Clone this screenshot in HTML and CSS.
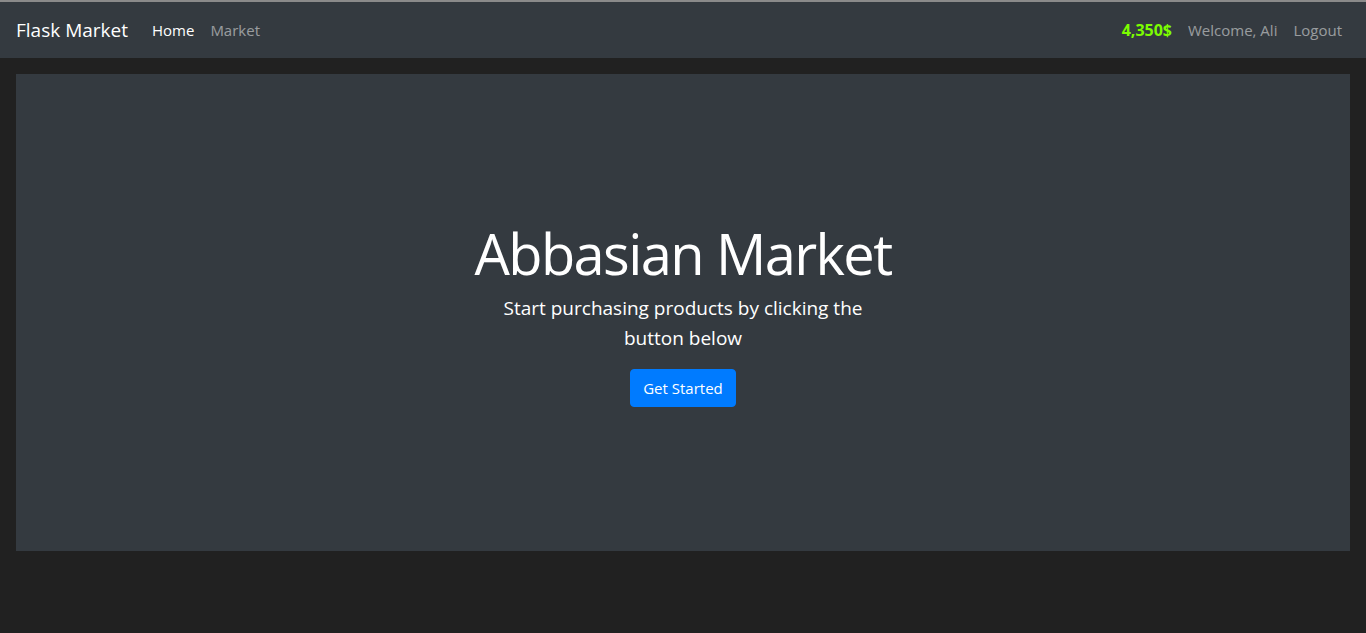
FILE: index.html
```html
<!DOCTYPE html>
<html>
<head>
<meta charset="utf-8">
<title>Flask Market</title>
<link rel="stylesheet" href="styles.css">
</head>
<body>
<div class="topline"></div>
<nav class="navbar">
  <a class="brand" href="#">Flask Market</a>
  <ul class="nav nav-left">
    <li><a class="nav-link active" href="#">Home</a></li>
    <li><a class="nav-link" href="#">Market</a></li>
  </ul>
  <ul class="nav nav-right">
    <li><span class="nav-link budget">4,350$</span></li>
    <li><a class="nav-link" href="#">Welcome, Ali</a></li>
    <li><a class="nav-link" href="#">Logout</a></li>
  </ul>
</nav>
<main class="page">
  <section class="hero">
    <div class="hero-inner">
      <h1 class="hero-title">Abbasian Market</h1>
      <p class="hero-lead">Start purchasing products by clicking the button below</p>
      <a class="btn-primary" href="#">Get Started</a>
    </div>
  </section>
</main>
</body>
</html>
```
FILE: styles.css
```css
* { box-sizing: border-box; }
html, body { margin: 0; padding: 0; }
body {
  background: #212121;
  font-family: "Open Sans", "Noto Sans", sans-serif;
  font-size: 16px;
  line-height: 1.5;
  color: #fff;
}
.topline { height: 2px; background: #8a8a8a; }
.navbar {
  display: flex;
  align-items: center;
  height: 56px;
  padding: 8px 16px;
  background: #343a40;
}
.brand {
  font-size: 19px;
  line-height: 30px;
  color: #fff;
  text-decoration: none;
  margin-right: 16px;
  padding: 5px 0;
}
.nav {
  display: flex;
  list-style: none;
  margin: 0;
  padding: 0;
}
.nav-right { margin-left: auto; }
.nav-link {
  display: block;
  padding: 8px;
  font-size: 15px;
  line-height: 24px;
  color: rgba(255,255,255,.5);
  text-decoration: none;
}
.nav-link.active { color: #fff; }
.budget { color: #7cfc00; font-weight: 700; font-size: 16px; }
.page { padding: 16px; }
.hero {
  background: #343a40;
  height: 477px;
  display: flex;
  align-items: center;
  justify-content: center;
}
.hero-inner {
  display: flex;
  flex-direction: column;
  align-items: center;
  text-align: center;
}
.hero-title {
  font-size: 56px;
  font-weight: 400;
  letter-spacing: -1.6px;
  line-height: 1.2;
  margin: 2px 0 6px;
}
.hero-lead {
  font-size: 19px;
  font-weight: 400;
  line-height: 30px;
  max-width: 390px;
  margin: 0 0 16px;
}
.btn-primary {
  display: inline-block;
  background: #007bff;
  color: #fff;
  text-decoration: none;
  padding: 6px 12px;
  border-radius: 4px;
  font-size: 15px;
  line-height: 24px;
  border: 1px solid #007bff;
}
```
